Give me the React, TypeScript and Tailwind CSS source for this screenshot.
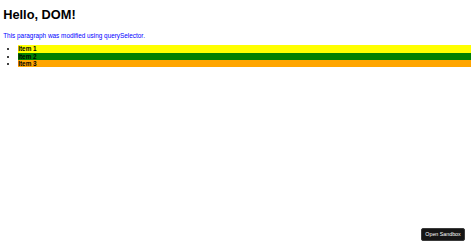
export default function App() {
    const items = [
        { label: 'Item 1', color: 'bg-[#ffff00]' },
        { label: 'Item 2', color: 'bg-[#008000]' },
        { label: 'Item 3', color: 'bg-[#ffa500]' },
    ];
    return (
        <div className="relative min-h-screen bg-white px-[3.2px] font-['Liberation_Sans',Arial,sans-serif] text-black">
            <h1 className="pt-[7.2px] text-[12.8px] font-bold leading-[15px]">Hello, DOM!</h1>
            <p className="mt-[9.5px] text-[6.4px] leading-[7.4px] text-[#0000ff]">
                This paragraph was modified using querySelector.
            </p>
            <ul className="mt-[6.2px] list-disc pl-[15px] text-[6.4px] leading-[7.35px]">
                {items.map((item) => (
                    <li key={item.label} className={`${item.color} font-bold`}>
                        {item.label}
                    </li>
                ))}
            </ul>
            <button className="fixed bottom-[7px] right-[9px] flex h-[13px] w-[44px] items-center justify-center rounded-[2px] border border-[#3a3a3a] bg-[#151515] text-[5.3px] leading-none text-white">
                Open Sandbox
            </button>
        </div>
    );
}
